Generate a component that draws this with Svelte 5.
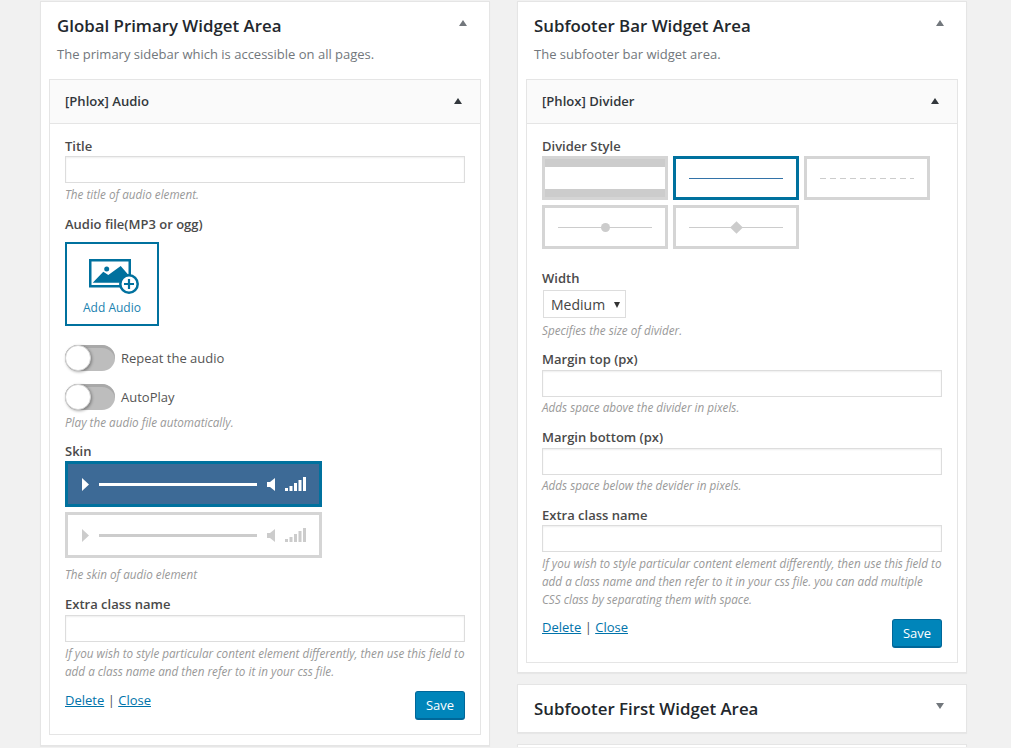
<script lang="ts">
	const selected = 1;
</script>

{#snippet toggle(text: string)}
	<div class="toggle-row">
		<span class="toggle"><span class="knob"></span></span>
		<span class="toggle-label">{text}</span>
	</div>
{/snippet}

{#snippet skin(active: boolean)}
	<div class="skin" class:active>
		<svg width="9" height="13" viewBox="0 0 9 13"><path d="M1 0l7 6.500-7 6.500z" /></svg>
		<span class="track"></span>
		<svg class="vol" width="9" height="13" viewBox="0 0 9 13"><path d="M0 4h3l5-4v13l-5-4H0z" /></svg>
		<svg width="21" height="14" viewBox="0 0 21 14">
			<rect x="0" y="11" width="3" height="3" />
			<rect x="4.500" y="9" width="3" height="5" />
			<rect x="9" y="6" width="3" height="8" />
			<rect x="13.500" y="3" width="3" height="11" />
			<rect x="18" y="0" width="3" height="14" />
		</svg>
	</div>
{/snippet}

{#snippet footer()}
	<div class="actions">
		<div class="links"><a href="#delete">Delete</a> <span class="sep">|</span> <a href="#close">Close</a></div>
		<button class="save">Save</button>
	</div>
{/snippet}

<div class="page">
	<div class="column">
		<section class="area">
			<header class="area-head">
				<h2>Global Primary Widget Area</h2>
				<span class="arrow up"></span>
			</header>
			<p class="area-desc">The primary sidebar which is accessible on all pages.</p>
			<div class="widget">
				<div class="widget-head">
					<span>[Phlox] Audio</span>
					<span class="arrow up dark"></span>
				</div>
				<div class="widget-body">
					<label class="lbl" for="audio-title">Title</label>
					<input id="audio-title" class="text" />
					<p class="help">The title of audio element.</p>

					<div class="lbl gap-file">Audio file(MP3 or ogg)</div>
					<div class="add-audio">
						<svg width="52" height="36" viewBox="0 0 52 36">
							<rect x="1.250" y="1.250" width="39.500" height="26" fill="#fff" stroke="#00719e" stroke-width="2.500" />
							<path d="M3.700 23.700L14.300 12.700 19.300 16 31.700 7 41 17.700V23.700z" fill="#00719e" />
							<circle cx="17.700" cy="10" r="2.500" fill="#00719e" />
							<circle cx="40" cy="25" r="8.700" fill="#fff" stroke="#00719e" stroke-width="2.500" />
							<path d="M40 20v10M35 25h10" stroke="#00719e" stroke-width="2.200" fill="none" />
						</svg>
						<span>Add Audio</span>
					</div>

					{@render toggle('Repeat the audio')}
					{@render toggle('AutoPlay')}
					<p class="help help-auto">Play the audio file automatically.</p>

					<div class="lbl gap-skin">Skin</div>
					{@render skin(true)}
					{@render skin(false)}
					<p class="help help-skin">The skin of audio element</p>

					<label class="lbl gap-extra" for="audio-class">Extra class name</label>
					<input id="audio-class" class="text low" />
					<p class="help">If you wish to style particular content element differently, then use this field to add a class name and then refer to it in your css file.</p>
					{@render footer()}
				</div>
			</div>
		</section>
	</div>

	<div class="column right">
		<section class="area">
			<header class="area-head">
				<h2>Subfooter Bar Widget Area</h2>
				<span class="arrow up"></span>
			</header>
			<p class="area-desc">The subfooter bar widget area.</p>
			<div class="widget">
				<div class="widget-head">
					<span>[Phlox] Divider</span>
					<span class="arrow up dark"></span>
				</div>
				<div class="widget-body divider-body">
					<div class="lbl">Divider Style</div>
					<div class="styles">
						{#each ['thick', 'solid', 'dashed', 'circle', 'diamond'] as kind, i}
							<div class="style-opt" class:active={i === selected}>
								<span class={'shape ' + kind}></span>
							</div>
						{/each}
					</div>

					<div class="lbl gap-width">Width</div>
					<div class="select">Medium <span class="caret"></span></div>
					<p class="help help-select">Specifies the size of divider.</p>

					<label class="lbl gap-field" for="margin-top">Margin top (px)</label>
					<input id="margin-top" class="text low" />
					<p class="help tight">Adds space above the divider in pixels.</p>

					<label class="lbl gap-field" for="margin-bottom">Margin bottom (px)</label>
					<input id="margin-bottom" class="text low" />
					<p class="help tight">Adds space below the devider in pixels.</p>

					<label class="lbl gap-field" for="divider-class">Extra class name</label>
					<input id="divider-class" class="text" />
					<p class="help">If you wish to style particular content element differently, then use this field to add a class name and then refer to it in your css file. you can add multiple CSS class by separating them with space.</p>
					{@render footer()}
				</div>
			</div>
		</section>

		<section class="area closed">
			<header class="area-head">
				<h2>Subfooter First Widget Area</h2>
				<span class="arrow down"></span>
			</header>
		</section>
		<section class="area closed"></section>
	</div>
</div>

<style>
	:global(body) {
		margin: 0;
		background: #f1f1f1;
		font-family: 'Open Sans', sans-serif;
		color: #444;
		overflow: hidden;
	}

	.page {
		display: flex;
		gap: 27px;
		padding: 1px 0 0 40px;
		height: 747px;
		overflow: hidden;
		box-sizing: border-box;
	}

	.column {
		width: 450px;
		flex: none;
		display: flex;
		flex-direction: column;
		gap: 11px;
	}

	.area {
		background: #fff;
		border: 1px solid #e5e5e5;
		box-shadow: 0 1px 1px rgba(0, 0, 0, 0.04);
		box-sizing: border-box;
		padding-bottom: 10px;
	}

	.right .area {
		padding-bottom: 9px;
	}

	.right .area.closed,
	.area.closed {
		height: 49px;
		padding: 0;
		flex: none;
	}

	.area-head {
		display: flex;
		justify-content: space-between;
		padding: 13px 22px 0 16px;
	}

	h2 {
		margin: 0;
		font-size: 16.850px;
		font-weight: 600;
		line-height: 22px;
		color: #23282d;
	}

	.arrow {
		width: 0;
		height: 0;
		border-left: 4px solid transparent;
		border-right: 4px solid transparent;
		margin-top: 5px;
	}

	.arrow.up {
		border-bottom: 6px solid #72777c;
	}

	.arrow.down {
		border-top: 6px solid #72777c;
	}

	.arrow.dark {
		border-bottom-color: #32373c;
		margin: 0;
	}

	.area-desc {
		margin: 8px 0 16px 16px;
		font-size: 13px;
		line-height: 18px;
		color: #72777c;
	}

	.widget {
		margin: 0 8px;
		border: 1px solid #e5e5e5;
	}

	.widget-head {
		height: 43px;
		background: #fafafa;
		border-bottom: 1px solid #e5e5e5;
		display: flex;
		align-items: center;
		justify-content: space-between;
		padding: 0 18px 0 15px;
		font-size: 13.100px;
		font-weight: 600;
		color: #32373c;
	}

	.widget-head > span {
		position: relative;
		top: -1px;
	}

	.widget-body {
		padding: 13px 15px 14px;
	}

	.lbl {
		display: block;
		font-size: 13px;
		font-weight: 600;
		line-height: 18px;
		color: #4a4a4a;
	}

	.text {
		display: block;
		width: 100%;
		height: 27px;
		margin-top: 1px;
		box-sizing: border-box;
		border: 1px solid #ddd;
		background: #fff;
		box-shadow: inset 0 1px 2px rgba(0, 0, 0, 0.07);
		padding: 0;
	}

	.text.low {
		margin-top: 2px;
	}

	.help {
		margin: 2px 0 0;
		font-size: 11.700px;
		font-style: italic;
		line-height: 18px;
		color: #999;
	}

	.help.tight {
		margin-top: 1px;
		padding-bottom: 1px;
	}

	.gap-file {
		margin-top: 12px;
	}

	.add-audio {
		width: 94px;
		height: 84px;
		margin-top: 9px;
		box-sizing: border-box;
		border: 2px solid #00719e;
		display: flex;
		flex-direction: column;
		align-items: center;
		padding-top: 15px;
		color: #1a82b0;
		font-size: 12px;
		line-height: 16px;
	}

	.add-audio svg {
		margin-bottom: 5px;
		margin-left: 6px;
	}

	.toggle-row {
		display: flex;
		align-items: center;
		gap: 6px;
		height: 26px;
		margin-top: 13px;
		font-size: 13px;
		color: #555;
	}

	.add-audio + .toggle-row {
		margin-top: 19px;
	}

	.toggle {
		position: relative;
		width: 50px;
		height: 26px;
		border-radius: 13px;
		background: #bdbdbd;
		box-shadow: inset 0 3px 0 #a9a9a9;
		flex: none;
	}

	.knob {
		position: absolute;
		left: 0;
		top: 0;
		width: 26px;
		height: 26px;
		box-sizing: border-box;
		border-radius: 50%;
		background: #fff;
		border: 1px solid #d5d5d5;
		box-shadow: 1px 1px 3px rgba(0, 0, 0, 0.35);
	}

	.help-auto {
		margin-top: 3px;
	}

	.gap-skin {
		margin-top: 11px;
	}

	.skin {
		width: 257px;
		height: 46px;
		box-sizing: border-box;
		border: 3px solid #d5d5d5;
		background: #fff;
		margin-top: 1px;
		display: flex;
		align-items: center;
		gap: 8px;
		padding: 0 13px 0 13px;
		fill: #ccc;
	}

	.skin + .skin {
		margin-top: 5px;
	}

	.skin.active {
		border-color: #00719e;
		background: #3d6a96;
		fill: #fff;
	}

	.track {
		flex: 1;
		height: 3px;
		background: #ccc;
		margin-right: 1px;
		margin-left: 1px;
	}

	.skin.active .track {
		background: #fff;
	}

	.vol {
		margin-right: 1px;
		margin-left: 1px;
	}

	.help-skin {
		margin-top: 7px;
	}

	.gap-extra {
		margin-top: 12px;
	}

	.actions {
		display: flex;
		justify-content: space-between;
		margin-top: 9px;
	}

	.links {
		padding-top: 2px;
		font-size: 13px;
		line-height: 18px;
		color: #555;
	}

	.links a {
		color: #0073aa;
	}

	.save {
		width: 50px;
		height: 29px;
		margin-top: 2px;
		padding: 0;
		border: 1px solid #006799;
		border-bottom-width: 2px;
		border-radius: 3px;
		background: #0085ba;
		color: #fff;
		font: 13px 'Open Sans', sans-serif;
	}

	.styles {
		display: grid;
		grid-template-columns: repeat(3, 126px);
		gap: 5px;
		margin-top: 1px;
	}

	.style-opt {
		height: 44px;
		box-sizing: border-box;
		border: 3px solid #d5d5d5;
		display: flex;
		align-items: center;
		justify-content: center;
		position: relative;
	}

	.style-opt.active {
		border-color: #00719e;
	}

	.shape {
		display: block;
		width: 94px;
		height: 1px;
		background: #ccc;
		position: relative;
	}

	.shape.thick {
		width: 120px;
		height: 38px;
		background: #fff;
		border-top: 8px solid #ccc;
		border-bottom: 8px solid #ccc;
		box-sizing: border-box;
	}

	.shape.solid {
		background: #3373a8;
	}

	.shape.dashed {
		background: repeating-linear-gradient(90deg, #ccc 0 6px, transparent 6px 10px);
	}

	.shape.circle::after,
	.shape.diamond::after {
		content: '';
		position: absolute;
		background: #ccc;
		top: -4px;
		left: 43px;
		width: 9px;
		height: 9px;
	}

	.shape.circle::after {
		border-radius: 50%;
	}

	.shape.diamond::after {
		transform: rotate(45deg);
	}

	.gap-width {
		margin-top: 20px;
	}

	.select {
		width: 83px;
		height: 28px;
		margin-top: 3px;
		margin-left: 1px;
		box-sizing: border-box;
		border: 1px solid #ddd;
		display: flex;
		align-items: center;
		padding-left: 7px;
		font-size: 14px;
		color: #444;
		position: relative;
	}

	.caret {
		position: absolute;
		right: 5px;
		top: 11px;
		width: 0;
		height: 0;
		border-left: 3.500px solid transparent;
		border-right: 3.500px solid transparent;
		border-top: 6px solid #333;
	}

	.help-select {
		margin-top: 3px;
	}

	.gap-field {
		margin-top: 11px;
	}

	.divider-body .actions {
		margin-top: 9px;
	}

	.divider-body .links {
		padding-top: 1px;
	}
</style>
